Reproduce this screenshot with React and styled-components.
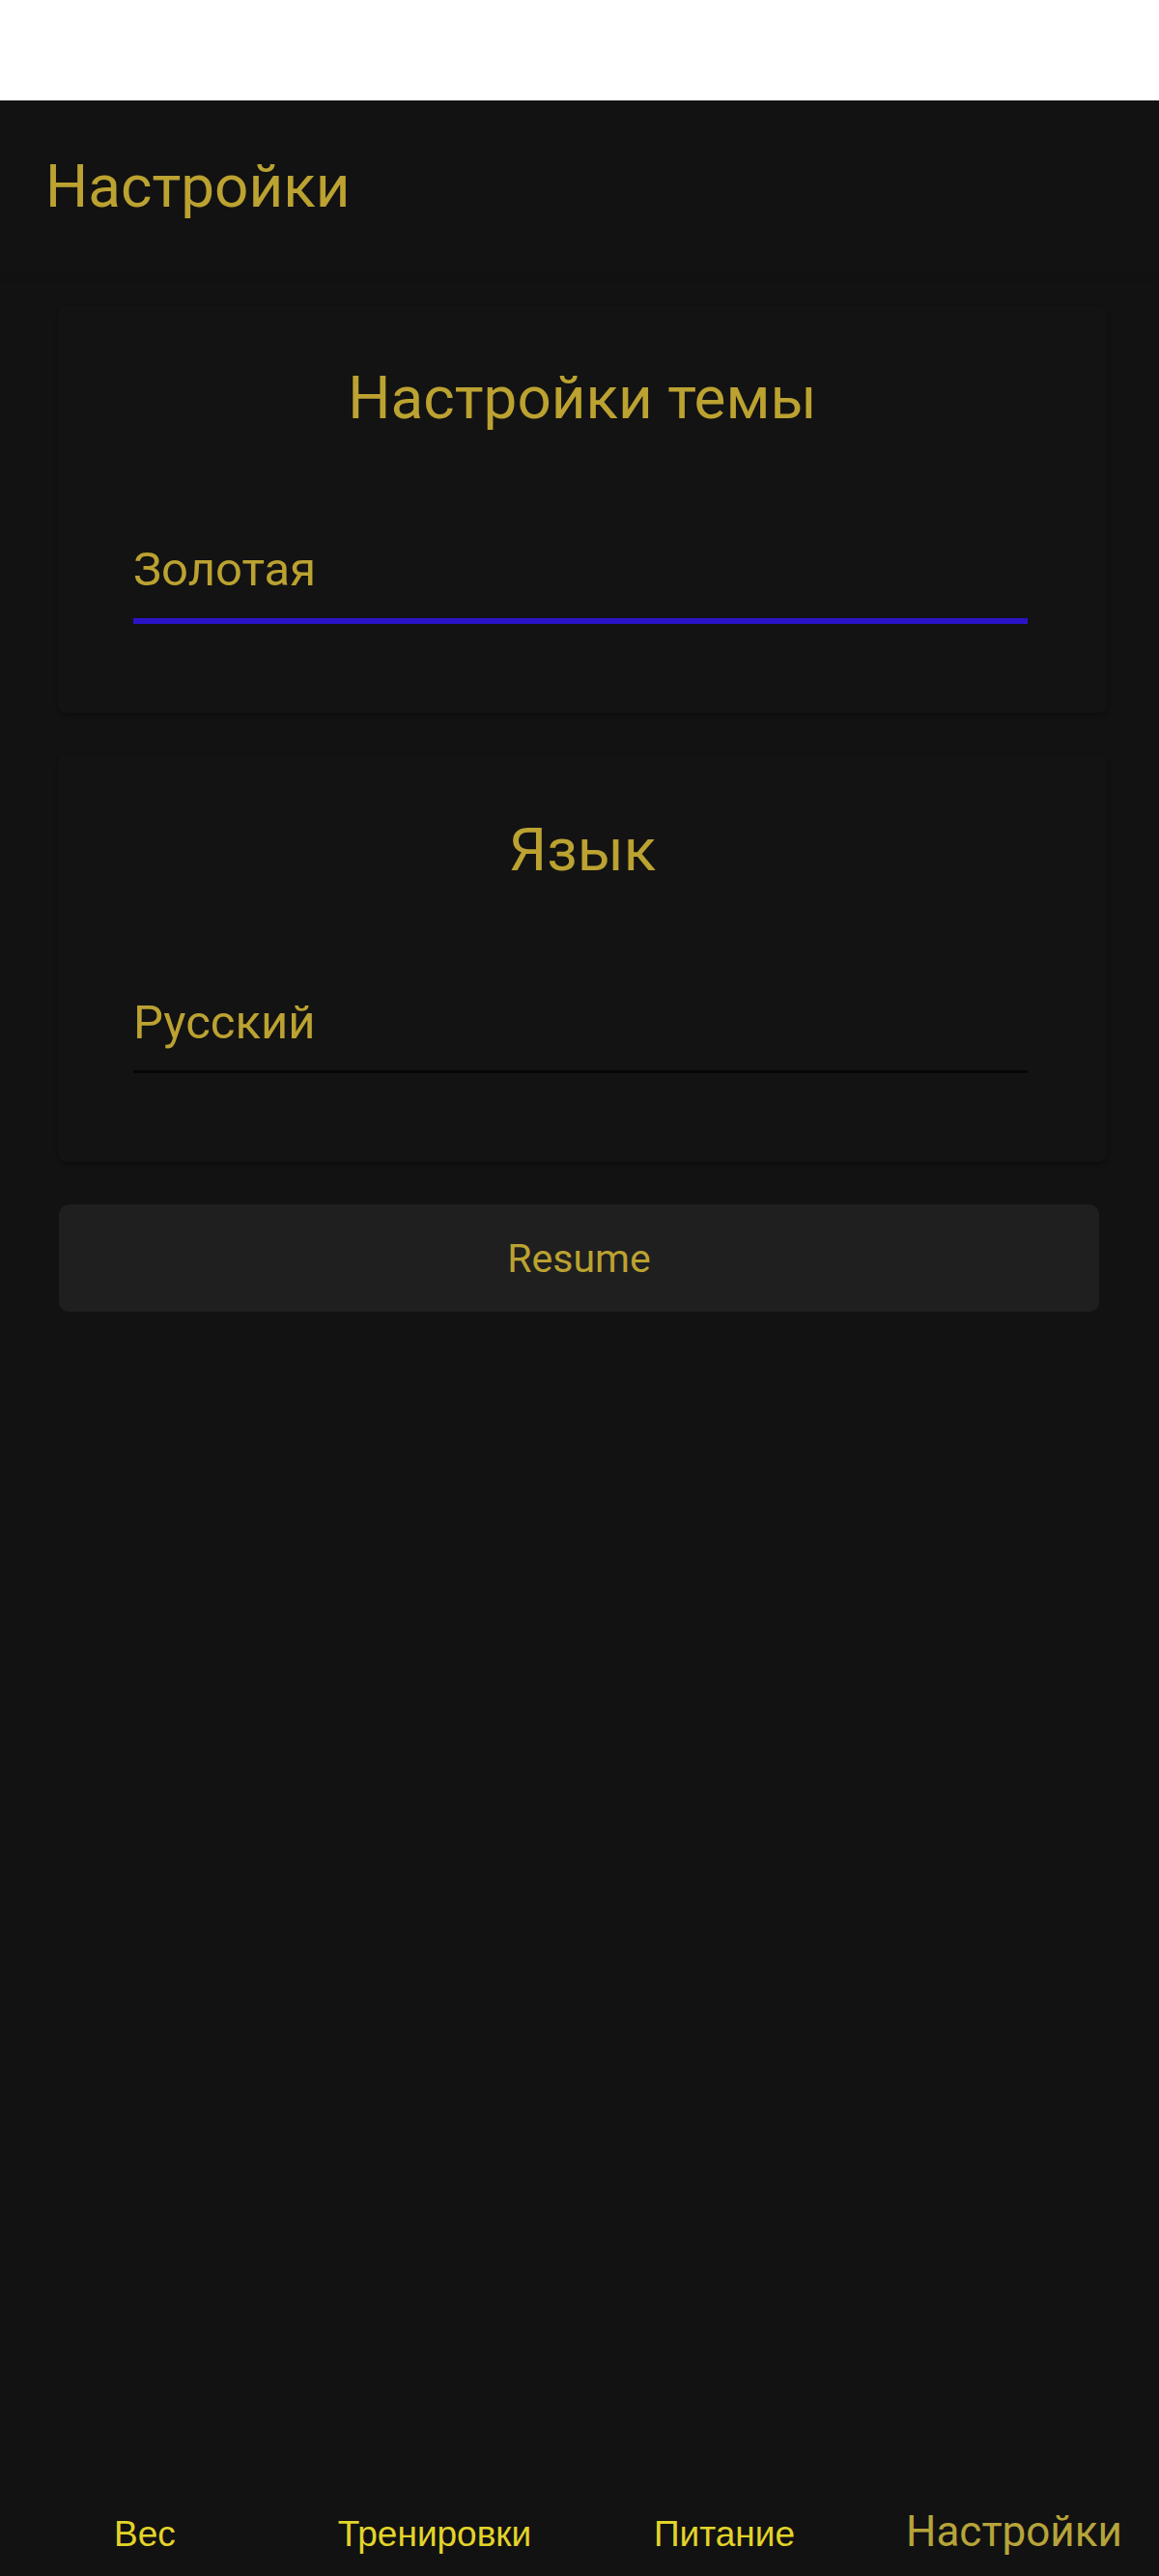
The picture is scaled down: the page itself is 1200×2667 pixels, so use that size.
import styled, { createGlobalStyle } from "styled-components"

const GlobalStyle = createGlobalStyle`
    html, body {
        margin: 0;
        padding: 0;
        background-color: #121212;
    }
    * {
        box-sizing: border-box;
    }
`

const Page = styled.div`
    min-height: 2667px;
    display: flex;
    flex-direction: column;
    font-family: Roboto, "Noto Sans", sans-serif;
`
const StatusBar = styled.div`
    height: 104px;
    background-color: #ffffff;
`
const Screen = styled.div`
    flex: 1;
    display: flex;
    flex-direction: column;
    background-color: #121212;
`
const TopBar = styled.header`
    height: 178px;
    padding-left: 47px;
    display: flex;
    align-items: center;
    box-shadow: 0 4px 8px rgba(0, 0, 0, 0.1);
`
const TopTitle = styled.h1`
    margin: 0;
    font-size: 62px;
    font-weight: 400;
    line-height: 1;
    color: #bba231;
`
const Content = styled.main`
    padding: 35px 54px 0 60px;
    display: flex;
    flex-direction: column;
    gap: 43px;
`
const Card = styled.section`
    background-color: #131313;
    border-radius: 8px;
    box-shadow: 0 2px 4px rgba(0, 0, 0, 0.3);
    padding: ${({ $first }) => ($first ? "58px" : "62px")} 82px 92px 78px;
    display: flex;
    flex-direction: column;
`
const CardTitle = styled.h2`
    margin: 0 0 112px 4px;
    text-align: center;
    font-size: 62px;
    font-weight: 400;
    line-height: 1.2;
    color: #bba231;
`
const Field = styled.div`
    padding-bottom: 20px;
    border-bottom: ${({ $thick }) => ($thick ? "6px solid #2b14c8" : "3px solid #060606")};
    font-size: 49px;
    line-height: 1.2;
    color: #bba231;
`
const ResumeButton = styled.button`
    margin: 1px 8px 0 1px;
    height: 111px;
    border: none;
    border-radius: 10px;
    background-color: #1f1f1f;
    font-family: Roboto, "Noto Sans", sans-serif;
    font-size: 41px;
    color: #bba231;
    cursor: pointer;
`
const NavBar = styled.nav`
    margin-top: auto;
    display: grid;
    grid-template-columns: repeat(4, 1fr);
    align-items: baseline;
    padding-bottom: 20px;
`
const NavItem = styled.span`
    text-align: center;
    font-family: ${({ $active }) => ($active ? 'Roboto, "Noto Sans", sans-serif' : '"Liberation Sans", Arial, sans-serif')};
    font-size: ${({ $active }) => ($active ? "44px" : "37px")};
    color: ${({ $active }) => ($active ? "#b6a43a" : "#e2d42a")};
`

const navItems = ["Вес", "Тренировки", "Питание", "Настройки"]

const App = () => {
    return (
        <Page>
            <GlobalStyle />
            <StatusBar />
            <Screen>
                <TopBar>
                    <TopTitle>Настройки</TopTitle>
                </TopBar>
                <Content>
                    <Card $first>
                        <CardTitle>Настройки темы</CardTitle>
                        <Field $thick>Золотая</Field>
                    </Card>
                    <Card>
                        <CardTitle>Язык</CardTitle>
                        <Field>Русский</Field>
                    </Card>
                    <ResumeButton>Resume</ResumeButton>
                </Content>
                <NavBar>
                    {navItems.map((item) => (
                        <NavItem key={item} $active={item === "Настройки"}>{item}</NavItem>
                    ))}
                </NavBar>
            </Screen>
        </Page>
    )
}

export default App
